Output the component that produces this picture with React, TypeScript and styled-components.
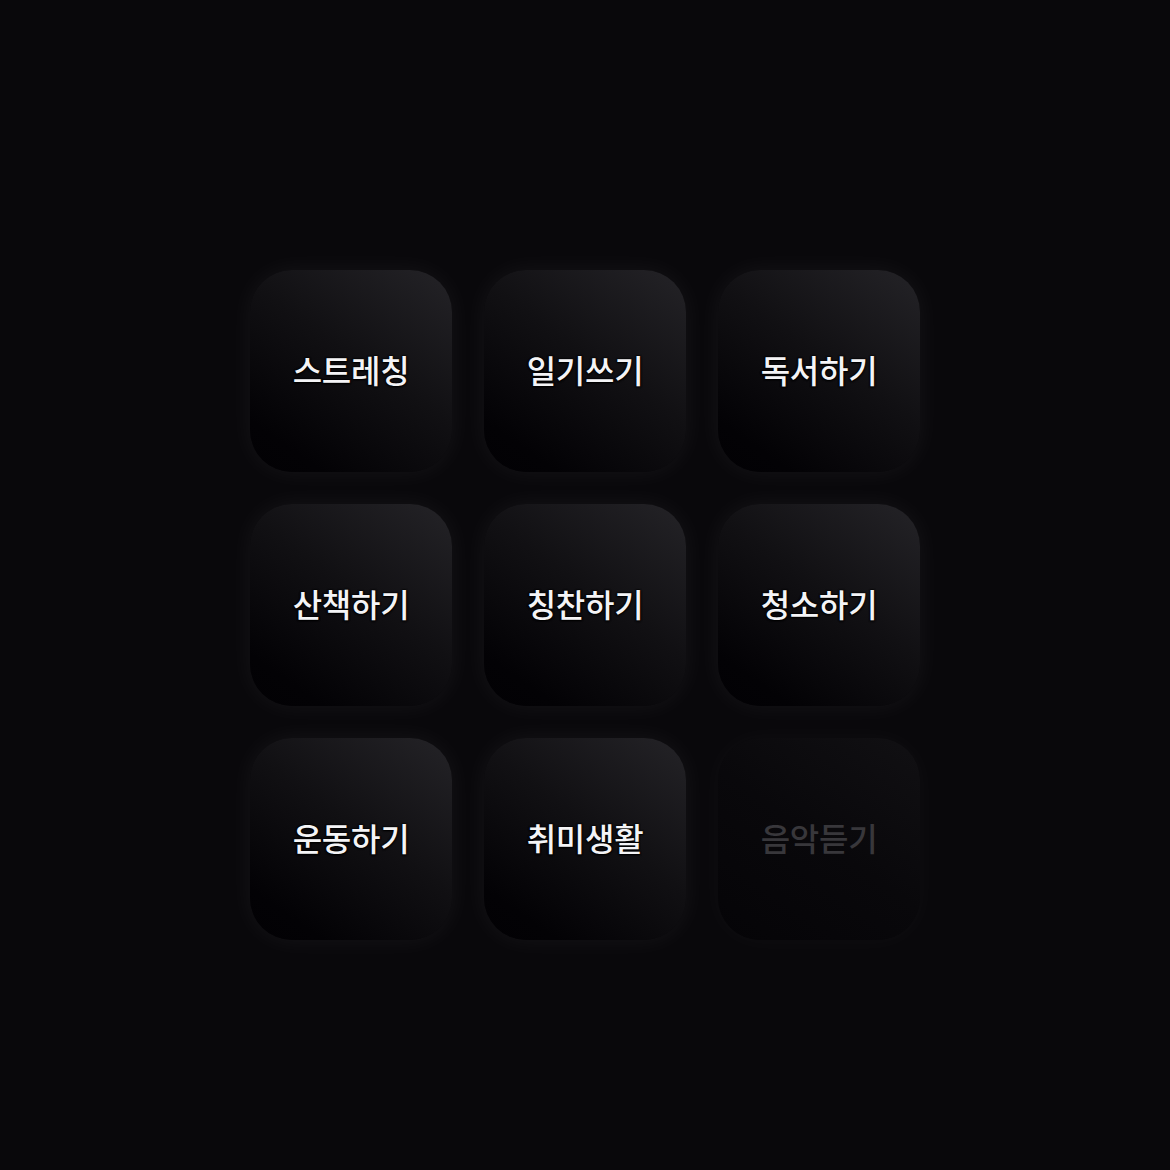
import React from "react"
import styled, { createGlobalStyle, css } from "styled-components"

const GlobalStyle = createGlobalStyle`
  html, body {
    margin: 0;
    padding: 0;
    background: #09080b;
  }
  body {
    font-family: "Noto Sans CJK KR", "Noto Sans", sans-serif;
  }
`

const ITEMS = [
  { label: "스트레칭" },
  { label: "일기쓰기" },
  { label: "독서하기" },
  { label: "산책하기" },
  { label: "칭찬하기" },
  { label: "청소하기" },
  { label: "운동하기" },
  { label: "취미생활" },
  { label: "음악듣기", disabled: true },
]

const Page = styled.main`
  box-sizing: border-box;
  width: 100%;
  min-height: 100vh;
  padding-top: 40px;
  display: flex;
  align-items: center;
  justify-content: center;
`

const Grid = styled.div`
  display: grid;
  grid-template-columns: repeat(3, 202px);
  grid-auto-rows: 202px;
  gap: 32px;
`

const Tile = styled.button<{ $disabled?: boolean }>`
  display: flex;
  align-items: center;
  justify-content: center;
  border: none;
  padding: 0;
  border-radius: 42px;
  cursor: pointer;
  background: linear-gradient(215deg, #242327 0%, #111013 45%, #030205 85%, #020104 100%);
  box-shadow: 0 0 26px rgba(255, 255, 255, 0.055);
  font-family: inherit;
  ${(p) =>
    p.$disabled &&
    css`
      background: linear-gradient(215deg, #111013 0%, #09080b 50%, #050407 100%);
      box-shadow: 0 0 26px rgba(255, 255, 255, 0.03);
      cursor: default;
    `}
`

const Label = styled.span<{ $disabled?: boolean }>`
  font-size: 32px;
  font-weight: 500;
  letter-spacing: -0.3px;
  color: ${(p) => (p.$disabled ? "#38373b" : "#f4f4f6")};
  text-shadow: ${(p) =>
    p.$disabled
      ? "none"
      : "0 0 1px #000, 0 0 2px #000, 0 0 2px #000, 0 1px 2px #000"};
  margin-top: -4px;
`

export default function App() {
  return (
    <>
      <GlobalStyle />
      <Page>
        <Grid>
          {ITEMS.map((item) => (
            <Tile key={item.label} $disabled={item.disabled}>
              <Label $disabled={item.disabled}>{item.label}</Label>
            </Tile>
          ))}
        </Grid>
      </Page>
    </>
  )
}
